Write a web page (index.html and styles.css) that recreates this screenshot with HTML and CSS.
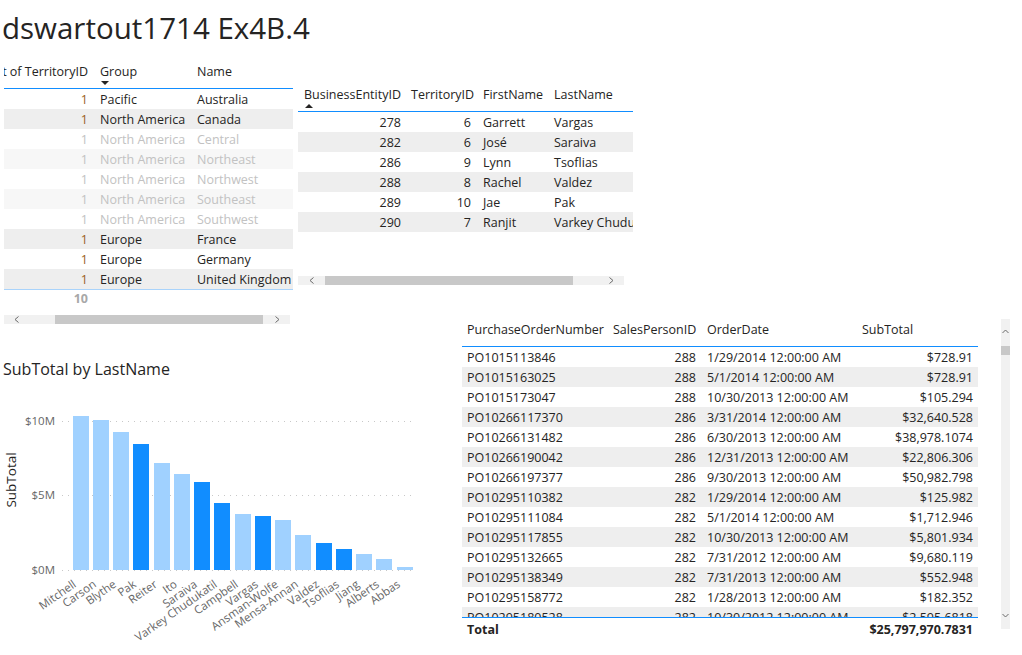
FILE: index.html
```html
<!DOCTYPE html>
<html>
<head>
<meta charset="utf-8">
<title>dswartout1714 Ex4B.4</title>
<link rel="stylesheet" href="styles.css">
</head>
<body>
<div class="page">
  <h1 class="title">dswartout1714 Ex4B.4</h1>
  <div class="canvas">
    <div class="col-left">
      <div class="tbl terr">
        <div class="thead">
          <div class="th c1 clip"><span>Count of TerritoryID</span></div>
          <div class="th c2">Group<i class="sort-down"></i></div>
          <div class="th c3">Name</div>
        </div>
        <div class="tbody">
          <div class="tr"><div class="td c1 num">1</div><div class="td c2">Pacific</div><div class="td c3">Australia</div></div>
          <div class="tr"><div class="td c1 num">1</div><div class="td c2">North America</div><div class="td c3">Canada</div></div>
          <div class="tr dim"><div class="td c1 num">1</div><div class="td c2">North America</div><div class="td c3">Central</div></div>
          <div class="tr dim"><div class="td c1 num">1</div><div class="td c2">North America</div><div class="td c3">Northeast</div></div>
          <div class="tr dim"><div class="td c1 num">1</div><div class="td c2">North America</div><div class="td c3">Northwest</div></div>
          <div class="tr dim"><div class="td c1 num">1</div><div class="td c2">North America</div><div class="td c3">Southeast</div></div>
          <div class="tr dim"><div class="td c1 num">1</div><div class="td c2">North America</div><div class="td c3">Southwest</div></div>
          <div class="tr"><div class="td c1 num">1</div><div class="td c2">Europe</div><div class="td c3">France</div></div>
          <div class="tr"><div class="td c1 num">1</div><div class="td c2">Europe</div><div class="td c3">Germany</div></div>
          <div class="tr"><div class="td c1 num">1</div><div class="td c2">Europe</div><div class="td c3">United Kingdom</div></div>
        </div>
        <div class="tfoot"><div class="td c1 num">10</div></div>
      </div>
      <div class="hscroll hs-terr">
        <div class="arrow arrow-l"><svg width="5" height="7" viewBox="0 0 5 7"><polyline points="4.5,0.5 1,3.5 4.5,6.5" class="chev"/></svg></div>
        <div class="thumb"></div>
        <div class="arrow arrow-r"><svg width="5" height="7" viewBox="0 0 5 7"><polyline points="0.5,0.5 4,3.5 0.5,6.5" class="chev"/></svg></div>
      </div>
      <div class="chart">
        <svg class="chart-svg" width="420" height="305" viewBox="0 0 420 305">
          <text class="ch-title" x="3" y="25">SubTotal by LastName</text>
          <text class="ax-title" x="16" y="130" text-anchor="middle" transform="rotate(-90 16 130)">SubTotal</text>
          <line class="grid" x1="62" x2="414" y1="71.5" y2="71.5"/>
          <line class="grid" x1="62" x2="414" y1="145.5" y2="145.5"/>
          <line class="grid" x1="62" x2="414" y1="220.5" y2="220.5"/>
          <text class="tick" x="55" y="75" text-anchor="end">$10M</text>
          <text class="tick" x="55" y="149" text-anchor="end">$5M</text>
          <text class="tick" x="55" y="224" text-anchor="end">$0M</text>
          <rect class="bar lt" x="73" y="66" width="16" height="154"/>
          <rect class="bar lt" x="93" y="70" width="16" height="150"/>
          <rect class="bar lt" x="113" y="82" width="16" height="138"/>
          <rect class="bar dk" x="133" y="94" width="16" height="126"/>
          <rect class="bar lt" x="154" y="113" width="16" height="107"/>
          <rect class="bar lt" x="174" y="124" width="16" height="96"/>
          <rect class="bar dk" x="194" y="132" width="16" height="88"/>
          <rect class="bar dk" x="214" y="153" width="16" height="67"/>
          <rect class="bar lt" x="235" y="164" width="16" height="56"/>
          <rect class="bar dk" x="255" y="166" width="16" height="54"/>
          <rect class="bar lt" x="275" y="170" width="16" height="50"/>
          <rect class="bar lt" x="295" y="185" width="16" height="35"/>
          <rect class="bar dk" x="316" y="193" width="16" height="27"/>
          <rect class="bar dk" x="336" y="199" width="16" height="21"/>
          <rect class="bar lt" x="356" y="204" width="16" height="16"/>
          <rect class="bar lt" x="376" y="209" width="16" height="11"/>
          <rect class="bar lt" x="397" y="217" width="16" height="3"/>
          <text class="xl" x="77" y="236" text-anchor="end" transform="rotate(-35 77 236)">Mitchell</text>
          <text class="xl" x="97" y="236" text-anchor="end" transform="rotate(-35 97 236)">Carson</text>
          <text class="xl" x="117" y="236" text-anchor="end" transform="rotate(-35 117 236)">Blythe</text>
          <text class="xl" x="137" y="236" text-anchor="end" transform="rotate(-35 137 236)">Pak</text>
          <text class="xl" x="158" y="236" text-anchor="end" transform="rotate(-35 158 236)">Reiter</text>
          <text class="xl" x="178" y="236" text-anchor="end" transform="rotate(-35 178 236)">Ito</text>
          <text class="xl" x="198" y="236" text-anchor="end" transform="rotate(-35 198 236)">Saraiva</text>
          <text class="xl" x="218" y="236" text-anchor="end" transform="rotate(-35 218 236)">Varkey Chudukatil</text>
          <text class="xl" x="239" y="236" text-anchor="end" transform="rotate(-35 239 236)">Campbell</text>
          <text class="xl" x="259" y="236" text-anchor="end" transform="rotate(-35 259 236)">Vargas</text>
          <text class="xl" x="279" y="236" text-anchor="end" transform="rotate(-35 279 236)">Ansman-Wolfe</text>
          <text class="xl" x="299" y="236" text-anchor="end" transform="rotate(-35 299 236)">Mensa-Annan</text>
          <text class="xl" x="320" y="236" text-anchor="end" transform="rotate(-35 320 236)">Valdez</text>
          <text class="xl" x="340" y="236" text-anchor="end" transform="rotate(-35 340 236)">Tsoflias</text>
          <text class="xl" x="360" y="236" text-anchor="end" transform="rotate(-35 360 236)">Jiang</text>
          <text class="xl" x="380" y="236" text-anchor="end" transform="rotate(-35 380 236)">Alberts</text>
          <text class="xl" x="401" y="236" text-anchor="end" transform="rotate(-35 401 236)">Abbas</text>
        </svg>
      </div>
    </div>
    <div class="col-right">
      <div class="people-wrap">
        <div class="tbl people">
          <div class="thead">
            <div class="th c1">BusinessEntityID<i class="sort-up"></i></div>
            <div class="th c2">TerritoryID</div>
            <div class="th c3">FirstName</div>
            <div class="th c4">LastName</div>
          </div>
          <div class="tbody">
            <div class="tr"><div class="td c1 num">278</div><div class="td c2 num">6</div><div class="td c3">Garrett</div><div class="td c4">Vargas</div></div>
            <div class="tr"><div class="td c1 num">282</div><div class="td c2 num">6</div><div class="td c3">José</div><div class="td c4">Saraiva</div></div>
            <div class="tr"><div class="td c1 num">286</div><div class="td c2 num">9</div><div class="td c3">Lynn</div><div class="td c4">Tsoflias</div></div>
            <div class="tr"><div class="td c1 num">288</div><div class="td c2 num">8</div><div class="td c3">Rachel</div><div class="td c4">Valdez</div></div>
            <div class="tr"><div class="td c1 num">289</div><div class="td c2 num">10</div><div class="td c3">Jae</div><div class="td c4">Pak</div></div>
            <div class="tr"><div class="td c1 num">290</div><div class="td c2 num">7</div><div class="td c3">Ranjit</div><div class="td c4">Varkey Chudukatil</div></div>
          </div>
        </div>
        <div class="hscroll hs-people">
          <div class="arrow arrow-l"><svg width="5" height="7" viewBox="0 0 5 7"><polyline points="4.5,0.5 1,3.5 4.5,6.5" class="chev"/></svg></div>
          <div class="thumb"></div>
          <div class="arrow arrow-r"><svg width="5" height="7" viewBox="0 0 5 7"><polyline points="0.5,0.5 4,3.5 0.5,6.5" class="chev"/></svg></div>
        </div>
      </div>
      <div class="orders-wrap">
        <div class="tbl orders">
          <div class="thead">
            <div class="th c1">PurchaseOrderNumber</div>
            <div class="th c2">SalesPersonID</div>
            <div class="th c3">OrderDate</div>
            <div class="th c4">SubTotal</div>
          </div>
          <div class="tbody">
            <div class="tr"><div class="td c1">PO1015113846</div><div class="td c2 num">288</div><div class="td c3">1/29/2014 12:00:00 AM</div><div class="td c4 num">$728.91</div></div>
            <div class="tr"><div class="td c1">PO1015163025</div><div class="td c2 num">288</div><div class="td c3">5/1/2014 12:00:00 AM</div><div class="td c4 num">$728.91</div></div>
            <div class="tr"><div class="td c1">PO1015173047</div><div class="td c2 num">288</div><div class="td c3">10/30/2013 12:00:00 AM</div><div class="td c4 num">$105.294</div></div>
            <div class="tr"><div class="td c1">PO10266117370</div><div class="td c2 num">286</div><div class="td c3">3/31/2014 12:00:00 AM</div><div class="td c4 num">$32,640.528</div></div>
            <div class="tr"><div class="td c1">PO10266131482</div><div class="td c2 num">286</div><div class="td c3">6/30/2013 12:00:00 AM</div><div class="td c4 num">$38,978.1074</div></div>
            <div class="tr"><div class="td c1">PO10266190042</div><div class="td c2 num">286</div><div class="td c3">12/31/2013 12:00:00 AM</div><div class="td c4 num">$22,806.306</div></div>
            <div class="tr"><div class="td c1">PO10266197377</div><div class="td c2 num">286</div><div class="td c3">9/30/2013 12:00:00 AM</div><div class="td c4 num">$50,982.798</div></div>
            <div class="tr"><div class="td c1">PO10295110382</div><div class="td c2 num">282</div><div class="td c3">1/29/2014 12:00:00 AM</div><div class="td c4 num">$125.982</div></div>
            <div class="tr"><div class="td c1">PO10295111084</div><div class="td c2 num">282</div><div class="td c3">5/1/2014 12:00:00 AM</div><div class="td c4 num">$1,712.946</div></div>
            <div class="tr"><div class="td c1">PO10295117855</div><div class="td c2 num">282</div><div class="td c3">10/30/2013 12:00:00 AM</div><div class="td c4 num">$5,801.934</div></div>
            <div class="tr"><div class="td c1">PO10295132665</div><div class="td c2 num">282</div><div class="td c3">7/31/2012 12:00:00 AM</div><div class="td c4 num">$9,680.119</div></div>
            <div class="tr"><div class="td c1">PO10295138349</div><div class="td c2 num">282</div><div class="td c3">7/31/2013 12:00:00 AM</div><div class="td c4 num">$552.948</div></div>
            <div class="tr"><div class="td c1">PO10295158772</div><div class="td c2 num">282</div><div class="td c3">1/28/2013 12:00:00 AM</div><div class="td c4 num">$182.352</div></div>
            <div class="tr"><div class="td c1">PO10295180528</div><div class="td c2 num">282</div><div class="td c3">10/30/2012 12:00:00 AM</div><div class="td c4 num">$2,595.6818</div></div>
          </div>
          <div class="tfoot">
            <div class="td c1">Total</div><div class="td c2"></div><div class="td c3"></div><div class="td c4 num">$25,797,970.7831</div>
          </div>
        </div>
        <div class="vscroll">
          <div class="varrow varrow-u"><svg width="7" height="5" viewBox="0 0 7 5"><polyline points="0.5,4 3.5,1 6.5,4" class="chev"/></svg></div>
          <div class="vthumb"></div>
          <div class="varrow varrow-d"><svg width="7" height="5" viewBox="0 0 7 5"><polyline points="0.5,1 3.5,4 6.5,1" class="chev"/></svg></div>
        </div>
      </div>
    </div>
  </div>
</div>
</body>
</html>
```
FILE: styles.css
```css
* { box-sizing: border-box; }

html, body {
  margin: 0;
  background: #ffffff;
  overflow: hidden;
}

body {
  font-family: "Open Sans", "Noto Sans", sans-serif;
  color: #252423;
}

.page {
  width: 1022px;
  height: 655px;
}

.title {
  margin: 0;
  height: 62px;
  padding: 8px 0 0 2px;
  font-size: 29.5px;
  font-weight: 400;
  line-height: 40px;
  color: #252423;
}

.canvas {
  display: flex;
  align-items: flex-start;
}

.col-left {
  flex: none;
  width: 298px;
  padding-left: 4px;
}

.col-right {
  flex: none;
}

/* ---------- tables ---------- */
.tbl {
  font-size: 12.5px;
  overflow: hidden;
}

.thead {
  display: flex;
  height: 27px;
  border-bottom: 1px solid #118dff;
}

.th {
  padding-top: 1px;
  line-height: 18px;
  white-space: nowrap;
  overflow: hidden;
}

.clip {
  display: flex;
  justify-content: flex-end;
}

.sort-down,
.sort-up {
  display: block;
  width: 0;
  height: 0;
  margin-left: 1px;
  border-left: 4px solid transparent;
  border-right: 4px solid transparent;
}

.sort-down { border-top: 4px solid #252423; }
.sort-up { border-bottom: 4px solid #252423; }

.tr {
  display: flex;
  height: 20px;
  line-height: 20px;
  white-space: nowrap;
}

.tr:nth-child(even) { background: #eeeeee; }

.td {
  white-space: nowrap;
  overflow: hidden;
}

.tr .td { padding-top: 1px; }

.num { text-align: right; }

.tr.dim { color: #c2c2c2; }
.tr.dim:nth-child(even) { background: #f7f7f7; }

/* territory table */
.terr { width: 289px; }
.terr .c1 { flex: none; width: 91px; padding-right: 7px; }
.terr .c2 { flex: none; width: 97px; padding-left: 5px; }
.terr .c3 { flex: 1; padding-left: 5px; }
.terr .tr .num { color: #9a5f22; }
.terr .tr.dim .num { color: #c2c2c2; }

.tfoot {
  display: flex;
  white-space: nowrap;
  font-weight: 700;
}

.terr .tfoot {
  height: 19px;
  line-height: 18px;
  border-top: 1px solid #a9d3fb;
  color: #a8a8a8;
}

/* scrollbars */
.hscroll {
  display: flex;
  align-items: center;
  height: 9px;
  background: #f1f1f1;
}

.arrow {
  flex: none;
  display: flex;
  justify-content: center;
  align-items: center;
  height: 9px;
}

.arrow svg { display: block; }

.chev {
  fill: none;
  stroke: #6a6a6a;
  stroke-width: 1;
}

.thumb {
  flex: none;
  height: 9px;
  background: #c8c8c8;
}

.arrow-r { margin-left: auto; }

.hs-terr { width: 286px; margin-top: 7px; }
.hs-terr .arrow-l { width: 24px; }
.hs-terr .thumb { margin-left: 27px; width: 208px; }
.hs-terr .arrow-r { width: 26px; }

.people-wrap { margin-top: 23px; }
.people { width: 335px; }
.people .tbody { height: 160px; }
.people .c1 { flex: none; width: 108px; padding-left: 6px; padding-right: 5px; }
.people .c2 { flex: none; width: 72px; padding-left: 5px; padding-right: 7px; }
.people .c3 { flex: none; width: 71px; padding-left: 5px; }
.people .c4 { flex: none; width: 120px; padding-left: 5px; }

.hs-people { width: 326px; margin-top: 4px; }
.hs-people .arrow-l { width: 26px; }
.hs-people .thumb { margin-left: 1px; width: 248px; }
.hs-people .arrow-r { width: 26px; }

/* orders table */
.orders-wrap {
  display: flex;
  align-items: flex-start;
  margin-top: 34px;
  margin-left: 164px;
}

.orders {
  flex: none;
  width: 516px;
  padding-top: 1px;
}

.orders .thead { height: 27px; }
.orders .tbody { height: 270px; overflow: hidden; }
.orders .c1 { flex: none; width: 146px; padding-left: 5px; }
.orders .c2 { flex: none; width: 93px; padding-left: 5px; padding-right: 5px; }
.orders .c3 { flex: none; width: 156px; padding-left: 6px; }
.orders .c4 { flex: none; width: 121px; padding-left: 5px; padding-right: 5px; }

.orders .tfoot {
  height: 22px;
  padding-top: 2px;
  line-height: 20px;
  border-top: 1px solid #118dff;
  color: #252423;
}

.vscroll {
  flex: none;
  display: flex;
  flex-direction: column;
  align-items: center;
  width: 9px;
  height: 310px;
  margin-left: 23px;
  background: #f1f1f1;
}

.varrow {
  flex: none;
  display: flex;
  justify-content: center;
  align-items: center;
  width: 9px;
}

.varrow svg { display: block; }
.varrow-u { height: 24px; }
.vthumb { flex: none; width: 9px; height: 9px; margin-top: 3px; background: #c8c8c8; }
.varrow-d { height: 28px; margin-top: auto; }

/* chart */
.chart {
  margin-top: 26px;
  margin-left: -4px;
  width: 420px;
  height: 305px;
}

.chart-svg { display: block; overflow: visible; }

.ch-title {
  font-family: "Open Sans", sans-serif;
  font-size: 16px;
  fill: #252423;
}

.ax-title {
  font-family: "Open Sans", sans-serif;
  font-size: 13.5px;
  fill: #252423;
}

.tick {
  font-family: "Open Sans", sans-serif;
  font-size: 11.5px;
  fill: #666666;
}

.xl {
  font-family: "Open Sans", sans-serif;
  font-size: 11.5px;
  fill: #666666;
}

.grid {
  stroke: #c8c8c8;
  stroke-width: 1;
  stroke-dasharray: 1 5;
}

.bar.dk { fill: #118dff; }
.bar.lt { fill: #a0d1ff; }
```
